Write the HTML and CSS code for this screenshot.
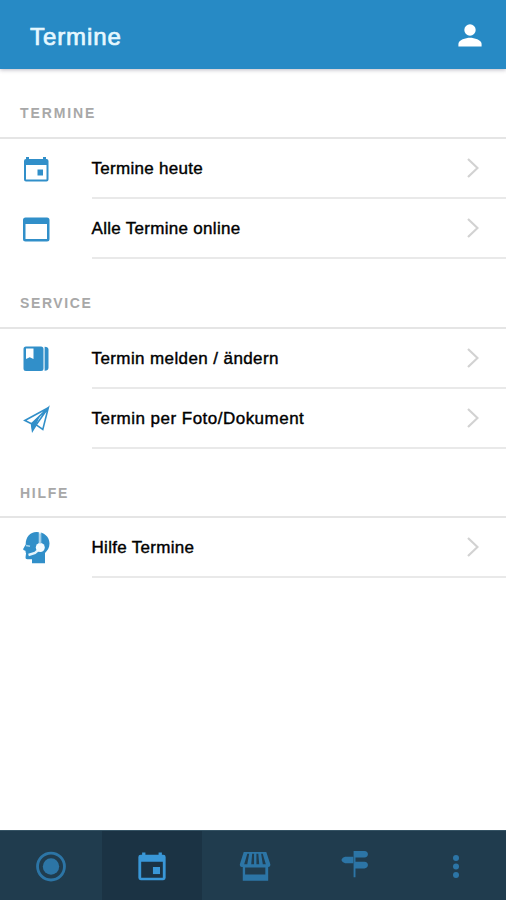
FILE: index.html
```html
<!DOCTYPE html>
<html lang="de">
<head>
<meta charset="utf-8">
<title>Termine</title>
<link rel="stylesheet" href="styles.css">
</head>
<body>
<div class="app">
  <header class="header">
    <h1 class="title">Termine</h1>
    <svg class="user" viewBox="0 0 24 24"><circle cx="12" cy="6" r="5.700"/><path d="M.4 22.500v-2.600c0-4 7.500-6.100 11.600-6.100s11.600 2.100 11.600 6.100v2.600z"/></svg>
  </header>
  <main class="content">
    <section>
      <h2 class="label label-termine"><span>TERMINE</span></h2>
      <div class="row">
        <svg class="icon" viewBox="0 0 32 40"><path fill-rule="evenodd" d="M6 9h3v2h14V9h3v2h.5a2 2 0 0 1 2 2v18.500a2 2 0 0 1-2 2h-20.500a2 2 0 0 1-2-2V13a2 2 0 0 1 2-2zM6 17v14.500h20.500V17z"/><path d="M17.500 21.500h5.500v6h-5.500z"/></svg>
        <div class="item"><span class="text t1">Termine heute</span><svg class="chevron" viewBox="0 0 12 20"><path d="M1 1l9.500 9L1 19"/></svg></div>
      </div>
      <div class="row">
        <svg class="icon" viewBox="0 0 32 40"><path fill-rule="evenodd" d="M5.500 9.500h21.500a2.500 2.500 0 0 1 2.500 2.500v19a2.500 2.500 0 0 1-2.500 2.500H5.500A2.500 2.500 0 0 1 3 31V12a2.500 2.500 0 0 1 2.500-2.500zM5.500 16v15h21.500V16z"/></svg>
        <div class="item"><span class="text t2">Alle Termine online</span><svg class="chevron" viewBox="0 0 12 20"><path d="M1 1l9.500 9L1 19"/></svg></div>
      </div>
    </section>
    <section>
      <h2 class="label label-service"><span>SERVICE</span></h2>
      <div class="row">
        <svg class="icon" viewBox="0 0 32 40"><path fill-rule="evenodd" d="M6 8.500h15a2.500 2.500 0 0 1 2.500 2.500v19.500a2.500 2.500 0 0 1-2.500 2.500H6a2.500 2.500 0 0 1-2.500-2.500V11A2.500 2.500 0 0 1 6 8.500zM6 10.500v10.500l3.700-1.800 3.800 1.800v-10.500z"/><path d="M24.600 8.800q3.900.2 3.900 3v18q0 2.800-3.900 3z"/></svg>
        <div class="item"><span class="text t3">Termin melden / ändern</span><svg class="chevron" viewBox="0 0 12 20"><path d="M1 1l9.500 9L1 19"/></svg></div>
      </div>
      <div class="row">
        <svg class="icon" viewBox="0 0 32 40"><path class="plane" d="M28.300 9.800L4.800 22.500l6.700 3.300L28.300 9.800 22.800 31.500l-6.600-4.700zM11.500 25.800l1 7 3.700-6L28.300 9.800"/><path d="M11 25.800l9.500-8.800-4.500 9.800-3.700 6.700z"/></svg>
        <div class="item"><span class="text t4">Termin per Foto/Dokument</span><svg class="chevron" viewBox="0 0 12 20"><path d="M1 1l9.500 9L1 19"/></svg></div>
      </div>
    </section>
    <section>
      <h2 class="label label-hilfe"><span>HILFE</span></h2>
      <div class="row">
        <svg class="icon" viewBox="0 0 32 40"><path d="M16.500 5C24 5 29.500 9.500 29.500 16.500c0 4.500-2 7-4.500 9.500v10.300H12v-4H7.500c-1.800 0-2.300-1.300-1.800-3.300l.4-3.200c-1-.5-.7-1.200-.3-1.800L3.500 23c-.5-.6-.3-1.300.2-2l2-3.500C5.700 10 10 5 16.500 5z"/><path class="band" d="M20 5v12M8.500 28l6.500-2 5-4.500"/><path class="eye" d="M6 18.500l4 .8"/><circle class="ear" cx="20.300" cy="20.500" r="4.500"/><path d="M19.700 6.500h.7v10h-.7z"/></svg>
        <div class="item item-help"><span class="text t5">Hilfe Termine</span><svg class="chevron" viewBox="0 0 12 20"><path d="M1 1l9.500 9L1 19"/></svg></div>
      </div>
    </section>
  </main>
  <nav class="tabs">
    <div class="tab"><svg class="tab-icon" viewBox="0 0 34 34"><circle cx="17" cy="16.500" r="8.700"/><circle class="ring" cx="17" cy="16.500" r="14.300"/></svg></div>
    <div class="tab active"><svg class="tab-icon" viewBox="0 0 34 34"><path fill-rule="evenodd" d="M6.500 1.500H10v2.500h14V1.500H27.500V4h1.500a2.500 2.500 0 0 1 2.500 2.500V28.500a2.500 2.500 0 0 1-2.500 2.500h-24A2.500 2.500 0 0 1 2.500 28.500V6.500a2.500 2.500 0 0 1 2.500-2.500h1.500zM5.500 11.500v17h23V11.500z"/><path d="M18 17h7.500v7.500h-7.500z"/></svg></div>
    <div class="tab"><svg class="tab-icon store" viewBox="0 0 34 34"><path fill-rule="evenodd" d="M5 1h24l4.200 12.700c.4 1.500-.2 3.300-2 3.300H3c-1.800 0-2.400-1.800-2-3.300zM8.800 3L5.500 14h3.300l2-11zM14 3l-1 11h3V3zM18.500 3v11h3l-1-11zM23.500 3l1.800 11h3.200L25.200 3z"/><path fill-rule="evenodd" d="M4 16h27v15.500H4zM6.500 17.500v7.500h21.500v-7.500z"/></svg></div>
    <div class="tab"><svg class="tab-icon sign" viewBox="0 0 34 34"><path d="M15.500 0h2v28h-2zM17 0h10c5 0 5 7 0 7H17zM16 6H6.500Q3.500 6.500 2.500 9.500 3.500 12.500 6.500 13h9.500zM17 11.500h10c5 0 5 7 0 7H17z"/></svg></div>
    <div class="tab"><svg class="tab-icon more" viewBox="0 0 34 34"><circle cx="17" cy="7.500" r="3.200"/><circle cx="17" cy="16.500" r="3.200"/><circle cx="17" cy="25.500" r="3.200"/></svg></div>
  </nav>
</div>
</body>
</html>
```
FILE: styles.css
```css
* { box-sizing: border-box; }
body {
  margin: 0;
  background: #fff;
  font-family: "Liberation Sans", Arial, sans-serif;
}
.app {
  width: 506px;
  height: 900px;
  display: flex;
  flex-direction: column;
  overflow: hidden;
}
.header {
  height: 69px;
  flex: none;
  display: flex;
  align-items: center;
  justify-content: space-between;
  padding: 3px 24px 0 30px;
  background: #278ac5;
  box-shadow: 0 1px 4px rgba(40, 30, 60, .3);
}
.title {
  margin: 0;
  padding-top: 1px;
  font-size: 24px;
  font-weight: 400;
  letter-spacing: .9px;
  color: #e6f8ff;
  -webkit-text-stroke: .7px #e6f8ff;
}
.user {
  width: 24px;
  height: 24px;
  fill: #fff;
}
.content { flex: 1; }
.label {
  height: 70px;
  margin: 0;
  padding: 20px 0 0 20px;
  display: flex;
  align-items: center;
  border-bottom: 2px solid #e5e5e5;
  font-size: 14px;
  font-weight: 700;
  color: #a8a8a8;
}
.label-termine { letter-spacing: 1.9px; }
.label-service { letter-spacing: 1.6px; }
.label-hilfe {
  height: 69px;
  letter-spacing: 1.7px;
}
.row {
  height: 60px;
  display: flex;
  padding-left: 20px;
}
.icon {
  width: 32px;
  height: 40px;
  margin: 9px 40px 0 0;
  fill: #318fc9;
}
.item {
  flex: 1;
  display: flex;
  align-items: center;
  justify-content: space-between;
  padding: 1px 27px 0 0;
  border-bottom: 2px solid #e9e9e9;
}
.text {
  margin-left: -.5px;
  font-size: 17px;
  color: #000;
  white-space: nowrap;
  -webkit-text-stroke: .4px #000;
}
.t1 { letter-spacing: .28px; }
.t2 { letter-spacing: .3px; }
.t3 { letter-spacing: .4px; }
.t4 { letter-spacing: .48px; }
.t5 { letter-spacing: .3px; }
.chevron {
  width: 12px;
  height: 20px;
  margin-bottom: 2px;
  fill: none;
  stroke: #d2d2d2;
  stroke-width: 2.2;
}
.plane {
  fill: none;
  stroke: #318fc9;
  stroke-width: 1.6;
}
.band {
  fill: none;
  stroke: #e5f4fb;
  stroke-width: 2.4;
}
.eye {
  stroke: #a5d3ec;
  stroke-width: 1.5;
}
.ear { fill: #f4fbff; }
.tabs {
  height: 70px;
  flex: none;
  display: grid;
  grid-template-columns: 102px 100px 1fr 1fr 1fr;
  background: #203c4e;
  border-top: 1px solid #355364;
}
.tab {
  display: flex;
  align-items: center;
  justify-content: center;
  padding-top: 3px;
}
.active { background: #1b3344; }
.tab-icon {
  width: 32px;
  height: 32px;
  fill: #2c75a6;
}
.store { margin-left: 4px; }
.sign { margin-left: 2px; }
.more { margin-left: 2px; }
.active .tab-icon { fill: #3997d7; }
.ring {
  fill: none;
  stroke: #2c75a6;
  stroke-width: 3;
}
```
